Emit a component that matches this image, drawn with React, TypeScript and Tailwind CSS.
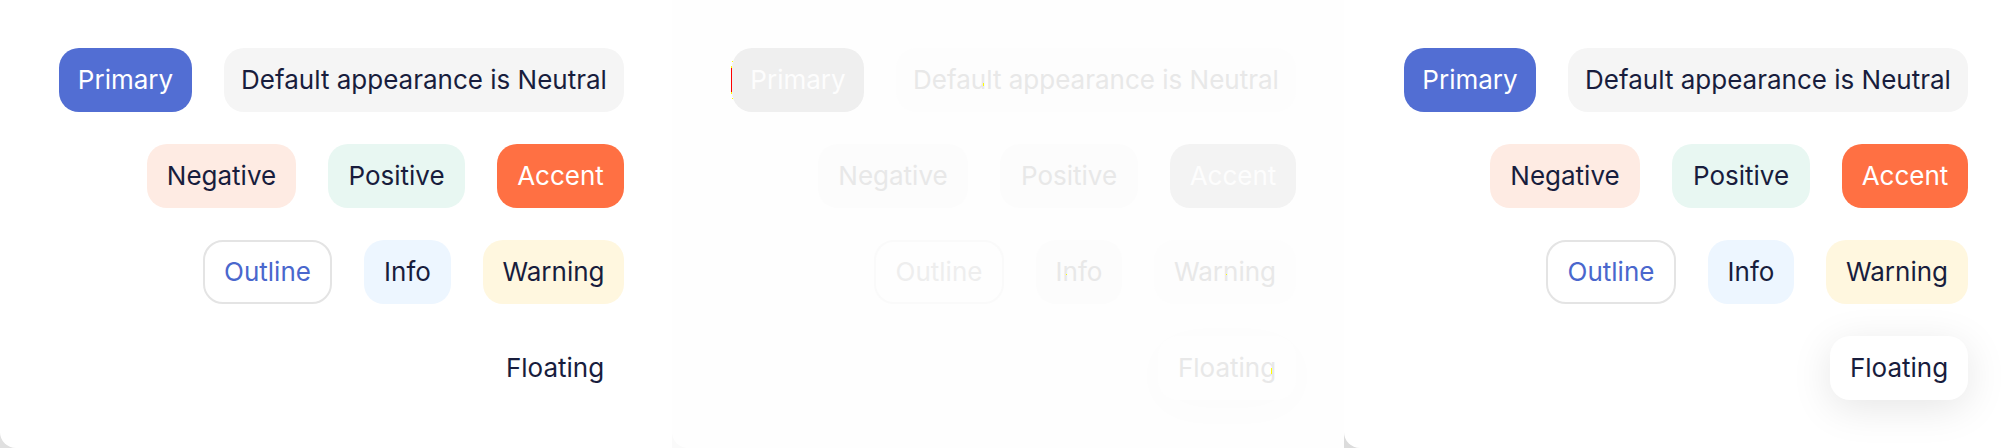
import { clsx } from "clsx";

type Tone =
  | "primary" | "neutral" | "negative" | "positive" | "accent"
  | "outline" | "info" | "warning" | "floating";

const rows: { label: string; tone: Tone }[][] = [
  [
    { label: "Primary", tone: "primary" },
    { label: "Default appearance is Neutral", tone: "neutral" },
  ],
  [
    { label: "Negative", tone: "negative" },
    { label: "Positive", tone: "positive" },
    { label: "Accent", tone: "accent" },
  ],
  [
    { label: "Outline", tone: "outline" },
    { label: "Info", tone: "info" },
    { label: "Warning", tone: "warning" },
  ],
  [{ label: "Floating", tone: "floating" }],
];

const before: Record<Tone, string> = {
  primary: "w-[133px]",
  neutral: "w-[400px]",
  negative: "w-[149px]",
  positive: "w-[137px]",
  accent: "w-[127px]",
  outline: "w-[129px]",
  info: "w-[87px]",
  warning: "w-[141px]",
  floating: "w-[138px]",
};

const after: Record<Tone, string> = {
  primary: "w-[132px]",
  neutral: "w-[400px]",
  negative: "w-[150px]",
  positive: "w-[138px]",
  accent: "w-[126px]",
  outline: "w-[130px]",
  info: "w-[86px]",
  warning: "w-[142px]",
  floating: "w-[138px]",
};

const vivid: Record<Tone, string> = {
  primary: "bg-[#526ed3] text-white",
  neutral: "bg-[#f5f5f5] text-[#181d3d]",
  negative: "bg-[#feebe3] text-[#181d3d]",
  positive: "bg-[#e8f7f2] text-[#181d3d]",
  accent: "bg-[#ff7043] text-white",
  outline: "border-2 border-[#e4e4e4] bg-white text-[#4a67cd]",
  info: "bg-[#edf6ff] text-[#181d3d]",
  warning: "bg-[#fff7df] text-[#181d3d]",
  floating: "bg-white text-[#181d3d] shadow-[0_8px_40px_rgba(0,0,0,0.1)]",
};

const flat: Record<Tone, string> = {
  ...vivid,
  floating: "text-[#181d3d]",
};

const faded: Record<Tone, string> = {
  primary: "bg-[#efefef] text-[#fdfdfd]",
  neutral: "bg-[#fdfdfd] text-[#e8e8e8]",
  negative: "bg-[#fcfcfc] text-[#e8e8e8]",
  positive: "bg-[#fcfcfc] text-[#e8e8e8]",
  accent: "bg-[#f3f3f3] text-[#fdfdfd]",
  outline: "border-2 border-[#fafafa] text-[#eeeeee]",
  info: "bg-[#fcfcfc] text-[#e8e8e8]",
  warning: "bg-[#fdfdfd] text-[#e8e8e8]",
  floating: "bg-[#fefefe] text-[#e8e8e8] shadow-[0_8px_48px_rgba(0,0,0,0.016)]",
};

function Badges({ palette, widths }: { palette: Record<Tone, string>; widths: Record<Tone, string> }) {
  return (
    <div className="flex flex-col gap-8">
      {rows.map((row, i) => (
        <div key={i} className="flex justify-end gap-8">
          {row.map(({ label, tone }) => (
            <span
              key={label}
              className={clsx(
                "flex h-16 items-center justify-center rounded-[20px] whitespace-nowrap",
                widths[tone],
                palette[tone],
              )}
            >
              {label}
            </span>
          ))}
        </div>
      ))}
    </div>
  );
}

function Marks() {
  return (
    <svg className="absolute top-0 left-0" width="672" height="448" shapeRendering="crispEdges" aria-hidden="true">
      <path fill="#f00" d="M59 68h1v24h-1z" />
      <path fill="#ff0" d="M60 61h1v1h-1zM59 66h1v2h-1zM59 92h1v2h-1zM60 98h1v1h-1zM311 83h1v3h-1zM394 274h1v1h-1zM554 274h1v1h-1zM599 368h1v6h-1z" />
    </svg>
  );
}

export default function App() {
  return (
    <main className="grid min-h-screen grid-cols-3 bg-white font-['Inter',sans-serif] text-[26px] leading-8">
      <section className="bg-[#e0e0e0]">
        <div className="h-full rounded-bl-2xl bg-white p-12">
          <Badges palette={flat} widths={before} />
        </div>
      </section>
      <section className="relative bg-[#fafafa]">
        <div className="h-full rounded-bl-2xl bg-[#fefefe] p-12">
          <Badges palette={faded} widths={after} />
        </div>
        <Marks />
      </section>
      <section className="bg-[#dcdcdc]">
        <div className="h-full rounded-bl-2xl bg-white p-12">
          <Badges palette={vivid} widths={after} />
        </div>
      </section>
    </main>
  );
}
